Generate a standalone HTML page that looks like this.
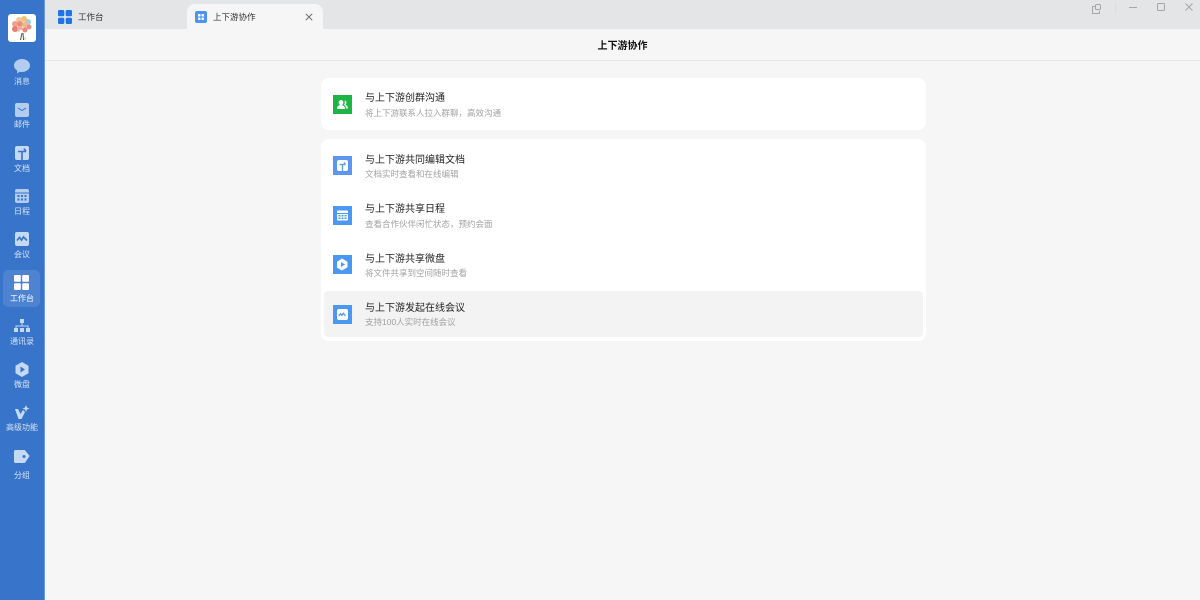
<!DOCTYPE html>
<html lang="zh"><head><meta charset="utf-8"><style>
*{box-sizing:border-box}
html,body{margin:0;padding:0;width:1200px;height:600px;overflow:hidden;background:#f6f6f6;font-family:"Liberation Sans","Noto Sans CJK SC",sans-serif}
.a{position:absolute}
#side{left:0;top:0;width:45px;height:600px;background:#3874c9;border-right:1px solid #6f9ada}
.lbl{position:absolute;left:0;width:44px;text-align:center;font-size:8px;line-height:12px;color:#d6e4f7;white-space:nowrap}
svg{position:absolute;display:block}
.card{position:absolute;left:321px;width:605px;background:#fff;border-radius:8px}
.t{position:absolute;left:365px;font-size:10px;line-height:14px;color:#222;white-space:nowrap}
.s{position:absolute;left:365px;font-size:8.500px;line-height:12px;color:#a2a2a2;white-space:nowrap}
</style></head><body>
<div class="a" style="left:45px;top:0;width:1155px;height:29px;background:#e4e5e7"></div>
<div class="a" style="left:45px;top:29px;width:1155px;height:32px;background:#f6f6f6;border-bottom:1px solid #e9e9e9"></div>
<div class="a" style="left:187px;top:4px;width:136px;height:26px;background:#f6f6f6;border-radius:8px 8px 0 0"></div>
<svg style="left:58px;top:10px" width="14" height="14"><g fill="#1f74ea"><rect width="6.300" height="6.300" rx="1.200"/><rect x="7.700" width="6.300" height="6.300" rx="1.200"/><rect y="7.700" width="6.300" height="6.300" rx="1.200"/><rect x="7.700" y="7.700" width="6.300" height="6.300" rx="1.200"/></g></svg>
<div class="a" style="left:78px;top:10px;font-size:8.500px;line-height:14px;color:#333">工作台</div>
<svg style="left:195px;top:11px" width="12" height="12"><rect width="12" height="12" rx="2" fill="#4b93f5"/><g fill="#fff"><rect x="3" y="3" width="2.500" height="2.500" rx=".6"/><rect x="6.500" y="3" width="2.500" height="2.500" rx=".6"/><rect x="3" y="6.500" width="2.500" height="2.500" rx=".6"/><rect x="6.500" y="6.500" width="2.500" height="2.500" rx=".6"/></g></svg>
<div class="a" style="left:213px;top:10px;font-size:8.500px;line-height:14px;color:#333">上下游协作</div>
<svg style="left:305px;top:13px" width="8" height="8"><path d="M.8.8l6.400 6.400M7.200.8L.8 7.200" stroke="#666" stroke-width="1" fill="none"/></svg>
<svg style="left:1090px;top:2px" width="110" height="14" fill="none" stroke="#a6a6a6" stroke-width="1"><path d="M5 4.500H2.500v7h7V9"/><rect x="5.500" y="2.500" width="5" height="5" rx="1"/><path d="M25.500 1v11" stroke="#dddddd"/><path d="M39 5.500h8"/><rect x="67.500" y="1.500" width="7" height="7" rx="1"/><path d="M95.500 1.500l7 7M102.500 1.500l-7 7"/></svg>

<div class="a" id="side"></div>
<div class="a" style="left:8px;top:14px;width:28px;height:28px;background:#fff;border-radius:3px"></div>
<svg style="left:10px;top:15px" width="24" height="26"><circle cx="9" cy="5" r="3" fill="#f2c6a0"/><circle cx="14" cy="4" r="3" fill="#f3c36d"/><circle cx="18" cy="7" r="3" fill="#a6cfd6"/><circle cx="5" cy="9" r="3" fill="#efa090"/><circle cx="10" cy="9" r="3" fill="#ea8d7c"/><circle cx="15" cy="10" r="3" fill="#f1b98c"/><circle cx="19" cy="12" r="2.500" fill="#e8908a"/><circle cx="5" cy="14" r="3" fill="#e97e6f"/><circle cx="10" cy="14" r="3" fill="#f1aba0"/><circle cx="15" cy="15" r="2.500" fill="#e9877b"/><circle cx="11" cy="16.500" r="1.700" fill="#fff"/><path d="M12 18l-1.500 7M13 18l.5 7" stroke="#554" stroke-width="1"/><path d="M15 22l0 3" stroke="#e8c25d" stroke-width="1"/></svg>

<svg style="left:14px;top:59px" width="16" height="15"><path d="M8 0c4.400 0 8 2.800 8 6.500S12.400 13 8 13c-.8 0-1.500-.1-2.200-.3L3 14.500l.2-3C1.200 10.300 0 8.500 0 6.500 0 2.800 3.600 0 8 0z" fill="#b2cdef"/></svg>
<div class="lbl" style="top:76px">消息</div>
<svg style="left:15px;top:103px" width="14" height="14"><rect width="14" height="14" rx="2" fill="#b2cdef"/><path d="M3 5l4 2.500L11 5" stroke="#3874c9" stroke-width="1" fill="none"/></svg>
<div class="lbl" style="top:119px">邮件</div>
<svg style="left:15px;top:146px" width="14" height="14"><rect width="14" height="14" rx="2" fill="#c4d9f3"/><path d="M7 14V5M3 5.500h8M9 2.500l2 3" stroke="#3874c9" stroke-width="1.600" fill="none"/></svg>
<div class="lbl" style="top:163px">文档</div>
<svg style="left:15px;top:189px" width="14" height="14"><rect width="14" height="14" rx="2" fill="#b2cdef"/><path d="M0 4h14" stroke="#3874c9"/><g fill="#3874c9"><rect x="2.500" y="6" width="2" height="2"/><rect x="6" y="6" width="2" height="2"/><rect x="9.500" y="6" width="2" height="2"/><rect x="2.500" y="9.500" width="2" height="2"/><rect x="6" y="9.500" width="2" height="2"/><rect x="9.500" y="9.500" width="2" height="2"/></g></svg>
<div class="lbl" style="top:206px">日程</div>
<svg style="left:15px;top:232px" width="14" height="14"><rect width="14" height="14" rx="2" fill="#c4d9f3"/><path d="M2 8.500l2.500-3 2 2.500 2-3 3.500 3.500" stroke="#3874c9" stroke-width="1.700" fill="none"/></svg>
<div class="lbl" style="top:249px">会议</div>
<div class="a" style="left:3px;top:270px;width:37px;height:37px;background:#4d83d0;border-radius:5px"></div>
<svg style="left:14px;top:275px" width="15" height="15"><g fill="#fff"><rect width="6.800" height="6.800" rx="1"/><rect x="8.200" width="6.800" height="6.800" rx="1"/><rect y="8.200" width="6.800" height="6.800" rx="1"/><rect x="8.200" y="8.200" width="6.800" height="6.800" rx="1"/></g></svg>
<div class="lbl" style="top:293px;color:#fff">工作台</div>
<svg style="left:14px;top:319px" width="16" height="15" fill="#c4d9f3"><rect x="6" y="0" width="4" height="4"/><rect x="0" y="9" width="4" height="4"/><rect x="6" y="9" width="4" height="4"/><rect x="12" y="9" width="4" height="4"/><path d="M8 4v3M2 9V7h12v2" stroke="#c4d9f3" fill="none"/></svg>
<div class="lbl" style="top:336px">通讯录</div>
<svg style="left:15px;top:362px" width="14" height="15"><path d="M7 0l6.500 3.700v7.600L7 15 .5 11.300V3.700z" fill="#c4d9f3"/><path d="M5.500 4.500L10 7.500 5.500 10.500z" fill="#3874c9"/></svg>
<div class="lbl" style="top:379px">微盘</div>
<svg style="left:14px;top:405px" width="16" height="15" fill="#c4d9f3"><path d="M1 4h3l2.500 5L9 5l2 2-3.500 7h-3z"/><path d="M12 0l1 2.500 2.500 1-2.500 1-1 2.500-1-2.500-2.500-1 2.500-1z"/></svg>
<div class="lbl" style="top:422px">高级功能</div>
<svg style="left:14px;top:450px" width="16" height="13"><path d="M1.500 0H10c.5 0 1 .2 1.300.6L15.600 6 11.300 12.400c-.3.400-.8.600-1.300.6H1.500C.7 13 0 12.300 0 11.500v-10C0 .7.700 0 1.500 0z" fill="#c4d9f3"/><circle cx="10" cy="6.500" r="1.500" fill="#3874c9"/></svg>
<div class="lbl" style="top:470px">分组</div>

<div class="a" style="left:45px;top:39px;width:1155px;text-align:center;font-size:10px;line-height:15px;font-weight:700;color:#111">上下游协作</div>

<div class="card" style="top:78px;height:52px"></div>
<div class="card" style="top:139px;height:202px"></div>
<div class="a" style="left:324px;top:291px;width:599px;height:46px;background:#f3f3f3;border-radius:4px"></div>

<svg style="left:333px;top:95px" width="19" height="19"><rect width="19" height="19" fill="#1fb545"/><path d="M4 14c0-2.500 1.500-3.500 3-4-1-.8-1.300-1.500-1.300-2.500C5.700 6 6.600 5 8 5s2.300 1 2.300 2.500c0 1-.3 1.700-1.300 2.500 1.500.5 3 1.500 3 4z" fill="#fff"/><path d="M11.500 5.500c1.200 0 2 .9 2 2.200 0 .8-.3 1.400-1 2 1.300.5 2.500 1.300 2.500 3.800h-2c0-2-1-3.200-2-3.800.8-1 .9-3 .5-4.200z" fill="#dff5e5"/></svg>
<div class="t" style="top:92px">与上下游创群沟通</div>
<div class="s" style="top:107px">将上下游联系人拉入群聊，高效沟通</div>

<svg style="left:333px;top:156px" width="19" height="19"><rect width="19" height="19" fill="#5d96f0"/><rect x="4" y="4" width="11" height="11" rx="2" fill="#fff"/><path d="M9.500 15V8M6.500 8.500h6M11 6.500l1.500 2" stroke="#5d96f0" stroke-width="1.300" fill="none"/></svg>
<div class="t" style="top:154px">与上下游共同编辑文档</div>
<div class="s" style="top:168px">文档实时查看和在线编辑</div>

<svg style="left:333px;top:206px" width="19" height="19"><rect width="19" height="19" fill="#4b98f2"/><rect x="4" y="4.500" width="11" height="10" rx="1" fill="#fff"/><path d="M4 7.500h11" stroke="#4b98f2"/><g fill="#4b98f2"><rect x="5.500" y="9" width="2" height="1.500"/><rect x="8.500" y="9" width="2" height="1.500"/><rect x="11.500" y="9" width="2" height="1.500"/><rect x="5.500" y="11.500" width="2" height="1.500"/><rect x="8.500" y="11.500" width="2" height="1.500"/><rect x="11.500" y="11.500" width="2" height="1.500"/></g></svg>
<div class="t" style="top:203px">与上下游共享日程</div>
<div class="s" style="top:218px">查看合作伙伴闲忙状态，预约会面</div>

<svg style="left:333px;top:255px" width="19" height="19"><rect width="19" height="19" fill="#4b98f2"/><path d="M9 3.500l5.500 3.200v5.600L9 15.500l-5-2.800V6.700z" fill="#fff"/><path d="M8 7l4 2.500-4 2.500z" fill="#4b98f2"/></svg>
<div class="t" style="top:253px">与上下游共享微盘</div>
<div class="s" style="top:267px">将文件共享到空间随时查看</div>

<svg style="left:333px;top:305px" width="19" height="19"><rect width="19" height="19" fill="#4b98f2"/><rect x="4" y="4" width="11" height="11" rx="2" fill="#fff"/><path d="M5.800 10.800l1.700-2 1.300 1.500 1.500-2 2.200 2.500" stroke="#4b98f2" stroke-width="1.300" fill="none"/></svg>
<div class="t" style="top:302px">与上下游发起在线会议</div>
<div class="s" style="top:316px">支持100人实时在线会议</div>
</body></html>
